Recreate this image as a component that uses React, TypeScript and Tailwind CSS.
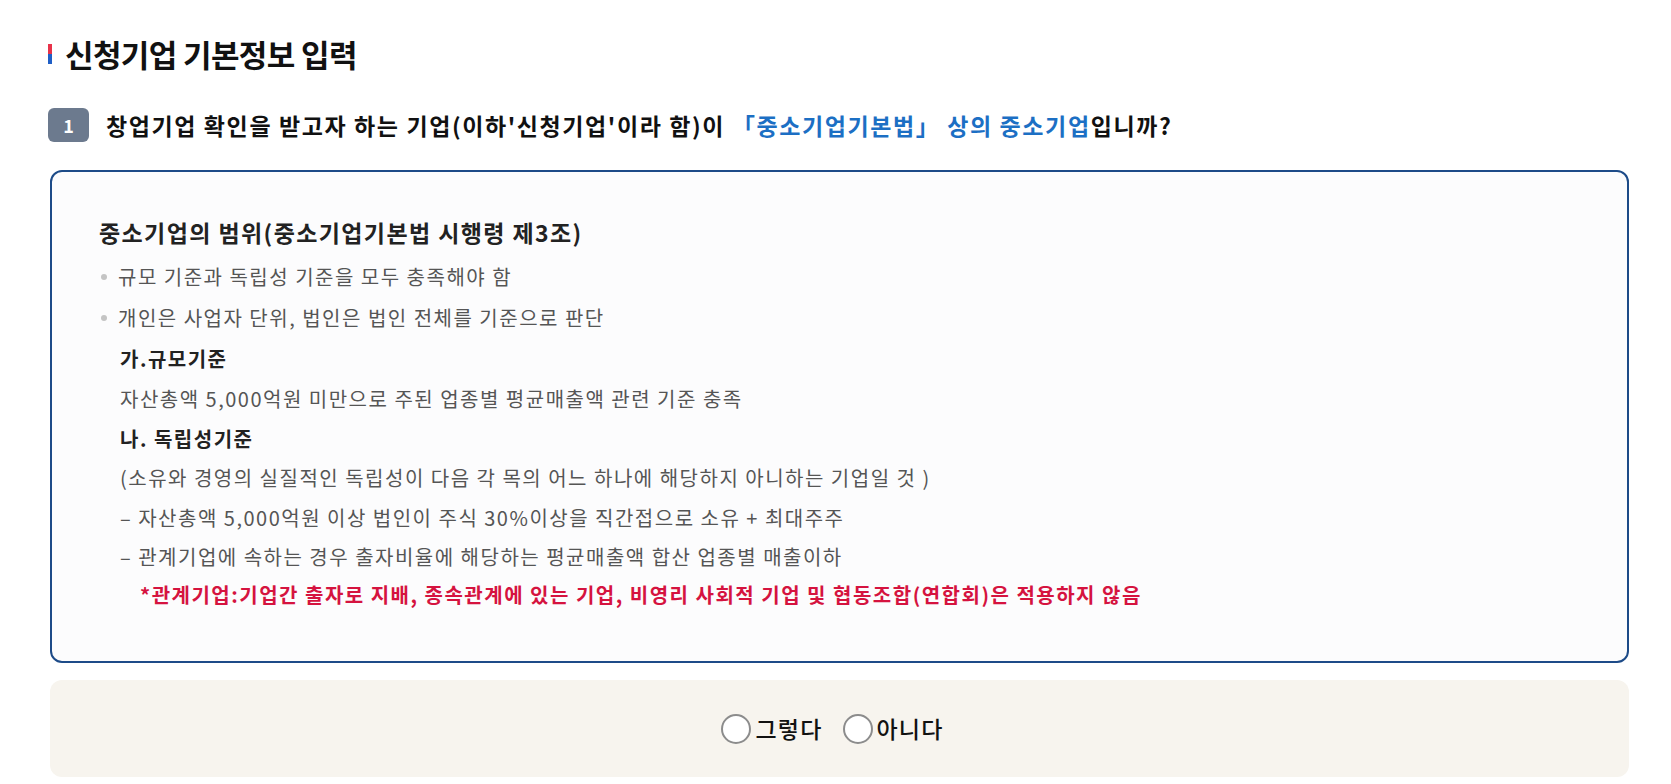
const font = { fontFamily: '"Noto Sans CJK KR", "Noto Sans", sans-serif' };

function Radio({ label }: { label: string }) {
  return (
    <label className="flex items-center gap-[4px] cursor-pointer">
      <span className="block h-[30px] w-[30px] rounded-full border-2 border-[#8c8c8c] bg-white" />
      <span className="text-[23px] font-medium tracking-[1.2px] text-[#111]">{label}</span>
    </label>
  );
}

export default function App() {
  return (
    <div className="min-h-screen bg-white text-[#111]" style={font}>
      <div className="ml-[48px] w-[1581px] pt-[34px]">
        <h2 className="flex items-center gap-[13px]">
          <span className="flex h-[20px] w-[4px] flex-col">
            <span className="h-1/2 w-full bg-[#e8334a]" />
            <span className="h-1/2 w-full bg-[#1f5fc6]" />
          </span>
          <span className="text-[31px] font-bold leading-[40px] tracking-[-0.02em]">신청기업 기본정보 입력</span>
        </h2>

        <div className="mt-[33px] flex items-center gap-[17px]">
          <span className="flex h-[34px] w-[41px] items-center justify-center rounded-[6px] bg-[#6c7a8e] text-[18px] font-bold text-white">
            1
          </span>
          <p className="text-[23px] font-bold leading-[36px] tracking-[1.6px]">
            창업기업 확인을 받고자 하는 기업(이하'신청기업'이라 함)이{" "}
            <span className="text-[#1c6fc4]">「중소기업기본법」 상의 중소기업</span>입니까?
          </p>
        </div>

        <div className="ml-[2px] mt-[27px] rounded-[12px] border-2 border-[#1d4b88] bg-[#fcfcfd] pb-[47px] pl-[47px] pr-[40px] pt-[40px]">
          <h3 className="text-[23px] font-bold leading-[40px] tracking-[1.4px] text-[#222]">
            중소기업의 범위(중소기업기본법 시행령 제3조)
          </h3>
          <ul className="mt-[4px] text-[20px] tracking-[1.5px] text-[#555]">
            <li className="flex h-[41px] items-center">
              <span className="mr-[11px] ml-[2px] h-[6px] w-[6px] rounded-full bg-[#c4c4c4]" />
              규모 기준과 독립성 기준을 모두 충족해야 함
            </li>
            <li className="flex h-[41px] items-center">
              <span className="mr-[11px] ml-[2px] h-[6px] w-[6px] rounded-full bg-[#c4c4c4]" />
              개인은 사업자 단위, 법인은 법인 전체를 기준으로 판단
            </li>
          </ul>
          <div className="pl-[21px] text-[20px] tracking-[1.5px] text-[#555]">
            <p className="flex h-[41px] items-center font-bold text-[#222]">가.규모기준</p>
            <p className="flex h-[40px] items-center">자산총액 5,000억원 미만으로 주된 업종별 평균매출액 관련 기준 충족</p>
            <p className="flex h-[40px] items-center font-bold text-[#222]">나. 독립성기준</p>
            <p className="flex h-[38px] items-center">(소유와 경영의 실질적인 독립성이 다음 각 목의 어느 하나에 해당하지 아니하는 기업일 것 )</p>
            <p className="flex h-[41px] items-center">– 자산총액 5,000억원 이상 법인이 주식 30%이상을 직간접으로 소유 + 최대주주</p>
            <p className="flex h-[38px] items-center">– 관계기업에 속하는 경우 출자비율에 해당하는 평균매출액 합산 업종별 매출이하</p>
            <p className="flex h-[38px] items-center pl-[20px] font-bold text-[#d5133f]">
              *관계기업:기업간 출자로 지배, 종속관계에 있는 기업, 비영리 사회적 기업 및 협동조합(연합회)은 적용하지 않음
            </p>
          </div>
        </div>

        <div className="ml-[2px] mt-[17px] flex h-[97px] items-center justify-center gap-[20px] rounded-[12px] bg-[#f7f4ee] pr-[14px]">
          <Radio label="그렇다" />
          <Radio label="아니다" />
        </div>
      </div>
    </div>
  );
}
